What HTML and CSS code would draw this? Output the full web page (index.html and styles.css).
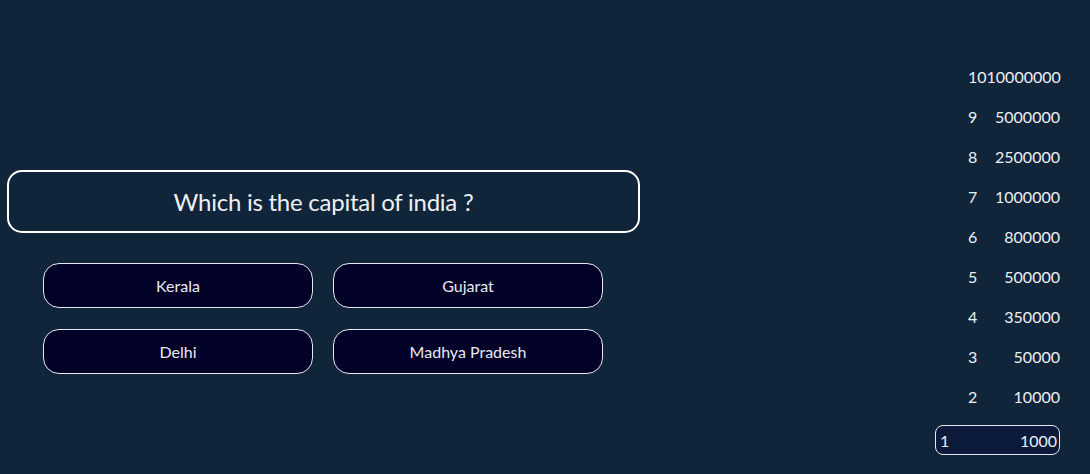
FILE: index.html
```html
<!DOCTYPE html>
<html>
<head>
<meta charset="utf-8">
<link rel="stylesheet" href="styles.css">
</head>
<body>
<div class="app">
  <div class="main">
    <div class="question">Which is the capital of india ?</div>
    <div class="answers">
      <div class="answer">Kerala</div>
      <div class="answer">Gujarat</div>
      <div class="answer">Delhi</div>
      <div class="answer">Madhya Pradesh</div>
    </div>
  </div>
  <div class="pyramid">
    <ul class="money-list">
      <li class="money-item"><span class="num">10</span><span class="amt">10000000</span></li>
      <li class="money-item"><span class="num">9</span><span class="amt">5000000</span></li>
      <li class="money-item"><span class="num">8</span><span class="amt">2500000</span></li>
      <li class="money-item"><span class="num">7</span><span class="amt">1000000</span></li>
      <li class="money-item"><span class="num">6</span><span class="amt">800000</span></li>
      <li class="money-item"><span class="num">5</span><span class="amt">500000</span></li>
      <li class="money-item"><span class="num">4</span><span class="amt">350000</span></li>
      <li class="money-item"><span class="num">3</span><span class="amt">50000</span></li>
      <li class="money-item"><span class="num">2</span><span class="amt">10000</span></li>
      <li class="money-item active"><span class="num">1</span><span class="amt">1000</span></li>
    </ul>
  </div>
</div>
</body>
</html>
```

FILE: styles.css
```css
* { box-sizing: border-box; }
html, body {
  margin: 0;
  padding: 0;
  height: 100%;
}
body {
  background: #10243a;
  color: #f0f0f4;
  font-family: Lato, "Open Sans", sans-serif;
  overflow: hidden;
}
.app {
  display: flex;
  height: 474px;
}
.main {
  width: 660px;
  padding: 170px 0 0 7px;
}
.question {
  width: 633px;
  height: 63px;
  border: 2px solid #ffffff;
  border-radius: 15px;
  display: flex;
  align-items: center;
  justify-content: center;
  font-size: 24px;
  letter-spacing: -0.25px;
  color: #eef0f4;
}
.answers {
  margin: 30px 0 0 36px;
  display: grid;
  grid-template-columns: 270px 270px;
  column-gap: 20px;
  row-gap: 21px;
}
.answer {
  height: 45px;
  background: #020228;
  border: 1px solid #e8e8f0;
  border-radius: 16px;
  display: flex;
  align-items: center;
  justify-content: center;
  font-size: 16px;
  color: #e8e8f2;
}
.pyramid {
  flex: 1;
  display: flex;
  justify-content: flex-end;
  padding: 56px 30px 0 0;
}
.money-list {
  list-style: none;
  margin: 0;
  padding: 0;
  width: 125px;
}
.money-item {
  height: 40px;
  display: flex;
  align-items: center;
  justify-content: space-between;
  padding-left: 33px;
  font-size: 16px;
  color: #eef0f4;
}
.money-item.active {
  margin-top: 9px;
  height: 30px;
  padding: 0 2px 0 4px;
  background: #0c1a3c;
  border: 1px solid #e8e8f0;
  border-radius: 8px;
}
```
